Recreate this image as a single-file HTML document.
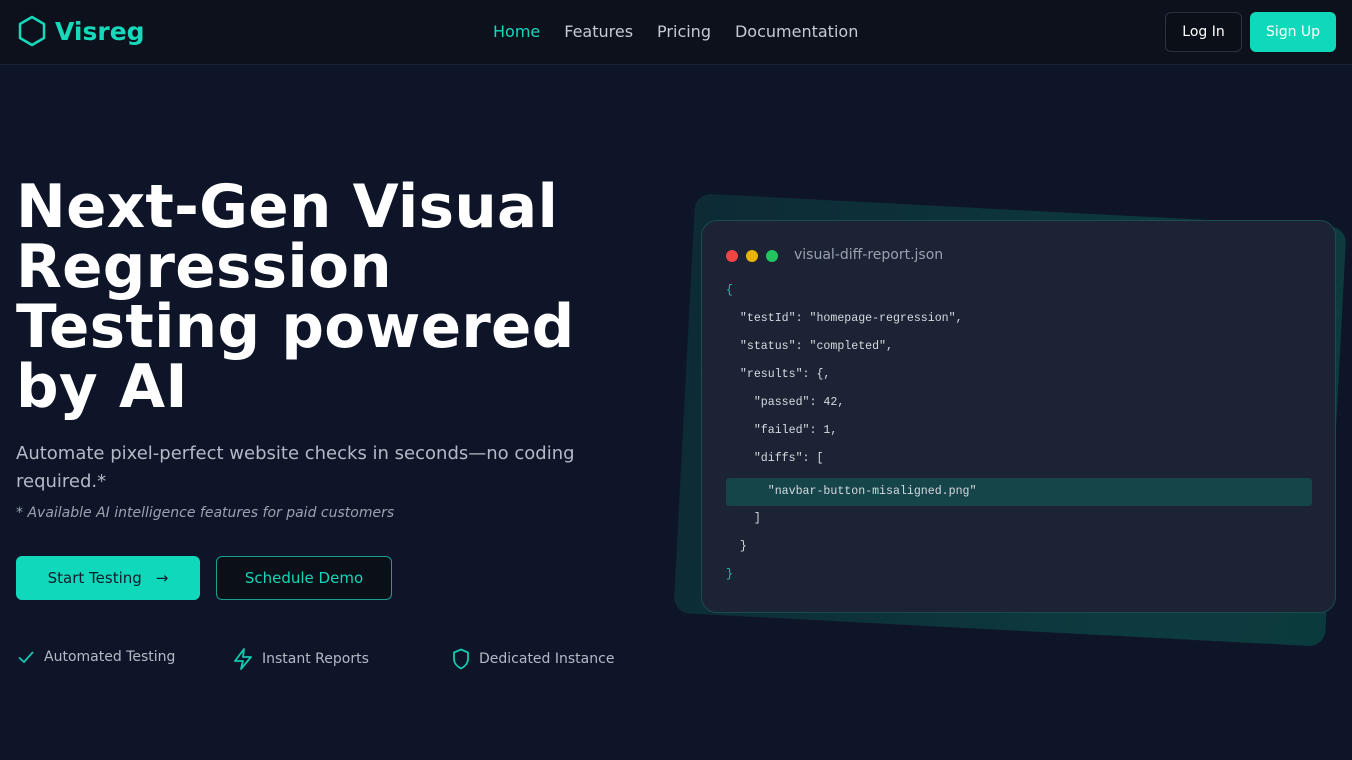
<!DOCTYPE html>
<html><head><meta charset="utf-8"><style>
*{margin:0;padding:0;box-sizing:border-box}
body{width:1352px;height:760px;overflow:hidden;background:#0e1529;font-family:"DejaVu Sans","Liberation Sans",sans-serif;color:#fff;position:relative}
.nav{position:absolute;left:0;top:0;width:1352px;height:65px;background:#0c111c;border-bottom:1px solid #16233a}
.logo{position:absolute;left:17px;top:15px;display:flex;align-items:center;gap:8px;color:#16d9bb;font-weight:bold;font-size:25px}
.links{position:absolute;left:493px;top:22px;font-size:16px;color:#c5cad3}
.links span{margin-right:24px}
.btn1{position:absolute;left:1165px;top:12px;width:77px;height:40px;border:1px solid #2a3140;border-radius:6px;background:#0b0f18;font-size:14px;display:flex;align-items:center;justify-content:center}
.btn2{position:absolute;left:1250px;top:12px;width:86px;height:40px;border-radius:6px;background:#0fd8bb;font-size:14px;display:flex;align-items:center;justify-content:center}
h1{position:absolute;left:16px;top:178px;font-size:59.5px;line-height:60px;font-weight:bold;letter-spacing:0.3px}
.sub{position:absolute;left:16px;top:440px;width:600px;font-size:18px;line-height:28px;color:#b3bac6}
.note{position:absolute;left:16px;top:505px;font-size:14px;font-style:italic;color:#9aa2b0}
.start{position:absolute;left:16px;top:556px;width:184px;height:44px;border-radius:6px;background:#0fd8bb;color:#0d1b2a;font-size:15px;display:flex;align-items:center;justify-content:center;gap:14px}
.demo{position:absolute;left:216px;top:556px;width:176px;height:44px;border-radius:6px;background:#0b0f18;border:1px solid #1a9f8f;color:#14d6b8;font-size:15px;display:flex;align-items:center;justify-content:center}
.feat{position:absolute;top:648px;font-size:14px;color:#b3bac6;display:flex;align-items:center;gap:9px}
.back{position:absolute;left:684px;top:210px;width:652px;height:420px;border-radius:16px;background:linear-gradient(100deg,#0d2a35,#0d3a3e 70%,#0b3a3d);transform:rotate(3deg);transform-origin:center}
.card{position:absolute;left:701px;top:220px;width:635px;height:393px;border-radius:16px;background:#1b2334;border:1px solid #1d4a4c}
.dot{position:absolute;top:29px;width:12px;height:12px;border-radius:50%}
.fname{position:absolute;left:92px;top:26px;font-size:14px;color:#9aa2b0}
.code{position:absolute;left:24px;top:59px;font-family:"Liberation Mono",monospace;font-size:11.6px;color:#d6dae1;white-space:pre}
.code div{height:28px;line-height:22px}
.hl{position:absolute;left:24px;top:257px;width:586px;height:28px;background:#154449;border-radius:3px}
</style></head><body>
<div class="nav">
 <div class="logo"><svg width="30" height="32" viewBox="0 0 30 32"><path d="M15 2L27 9V23L15 30L3 23V9Z" fill="none" stroke="#16d9bb" stroke-width="2.5" stroke-linejoin="round"/></svg>Visreg</div>
 <div class="links"><span style="color:#16d9bb">Home</span><span>Features</span><span>Pricing</span><span>Documentation</span></div>
 <div class="btn1">Log In</div><div class="btn2">Sign Up</div>
</div>
<h1>Next-Gen Visual<br>Regression<br>Testing powered<br>by AI</h1>
<div class="sub">Automate pixel-perfect website checks in seconds—no coding required.*</div>
<div class="note">* Available AI intelligence features for paid customers</div>
<div class="start">Start Testing <span>→</span></div>
<div class="demo">Schedule Demo</div>
<div class="feat" style="left:17px"><svg width="18" height="18" viewBox="0 0 18 18"><path d="M2 9.5L7 14L16 4" fill="none" stroke="#14c9ae" stroke-width="1.8"/></svg>Automated Testing</div>
<div class="feat" style="left:233px"><svg width="20" height="22" viewBox="0 0 20 22"><path d="M11 1L2 13H10L8 21L18 9H10Z" fill="none" stroke="#14c9ae" stroke-width="1.8" stroke-linejoin="round"/></svg>Instant Reports</div>
<div class="feat" style="left:452px"><svg width="18" height="22" viewBox="0 0 18 22"><path d="M9 1.5L16 4.5V11C16 15 13 18.5 9 20.5C5 18.5 2 15 2 11V4.5Z" fill="none" stroke="#14c9ae" stroke-width="1.8" stroke-linejoin="round"/></svg>Dedicated Instance</div>
<div class="back"></div>
<div class="card">
 <div class="dot" style="left:24px;background:#ef4444"></div>
 <div class="dot" style="left:44px;background:#eab308"></div>
 <div class="dot" style="left:64px;background:#22c55e"></div>
 <div class="fname">visual-diff-report.json</div>
 <div class="hl"></div>
 <div class="code"><div style="color:#14c9ae">{</div><div>  "testId": "homepage-regression",</div><div>  "status": "completed",</div><div>  "results": {,</div><div>    "passed": 42,</div><div>    "failed": 1,</div><div>    "diffs": [</div><div style="height:32px;line-height:32px">      "navbar-button-misaligned.png"</div><div>    ]</div><div>  }</div><div style="color:#14c9ae">}</div></div>
</div>
</body></html>
